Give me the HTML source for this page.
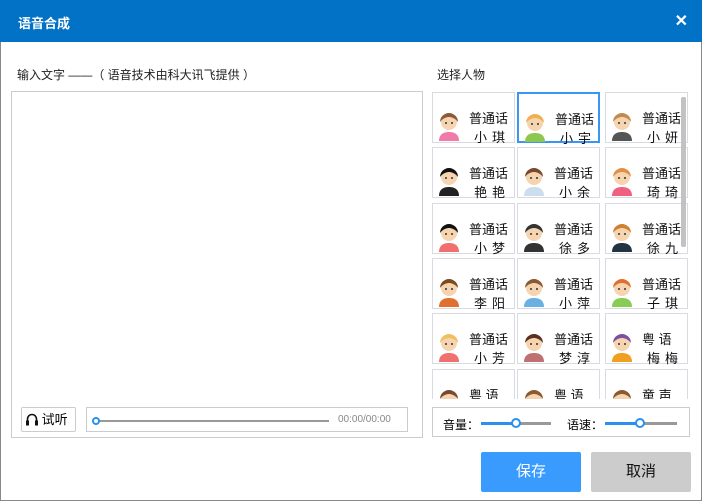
<!DOCTYPE html>
<html><head><meta charset="utf-8"><style>
*{margin:0;padding:0;box-sizing:border-box}
body{width:702px;height:501px;background:#fff;font-family:"Liberation Sans","Noto Sans CJK SC",sans-serif;position:relative;overflow:hidden}
.bl{position:absolute;background:#888}
.hd{position:absolute;left:0;top:0;width:702px;height:42px;background:#0272c6;color:#fff;font-weight:bold;font-size:13px}
.hd .t{position:absolute;left:18px;top:13px}
.hd .x{position:absolute;right:14px;top:11px;font-size:16px}
.lbl{position:absolute;font-size:12px;color:#222}
.ta{position:absolute;left:11px;top:91px;width:412px;height:347px;border:1px solid #ccc}
.btn{position:absolute;left:21px;top:407px;width:55px;height:25px;border:1px solid #ccc;border-radius:2px;font-size:13px;line-height:23px;padding-left:4px}
.prog{position:absolute;left:86px;top:407px;width:322px;height:25px;border:1px solid #ccc}
.grid{position:absolute;left:432px;top:92px;width:258px;height:307px;overflow:hidden}
.cell{position:absolute;width:83px;height:51px;border:1px solid #d8dce2;font-size:13px;color:#111}
.cell.sel{border:2px solid #3a96f5}
.cell .n1{position:absolute;left:36px;top:15px}
.cell .n2{position:absolute;left:41px;top:34px;letter-spacing:5px}
.av{position:absolute;left:4px;top:14px;width:24px;height:34px}
.sb{position:absolute;left:681px;top:97px;width:5px;height:150px;background:#c2c2c2;border-radius:2px}
.sl{position:absolute;left:432px;top:407px;width:258px;height:30px;border:1px solid #ccc;font-size:12px}
.b{position:absolute;top:452px;width:100px;height:40px;border-radius:2px;font-size:15px;text-align:center;line-height:40px}
</style></head><body>
<div class="bl" style="left:0;top:0;width:1px;height:501px"></div>
<div class="bl" style="right:0;top:0;width:1px;height:501px"></div>
<div class="bl" style="left:0;bottom:0;width:702px;height:1px"></div>
<div class="hd"><span class="t">语音合成</span><span class="x">✕</span></div>
<div class="lbl" style="left:17px;top:66px">输入文字 ——（ 语音技术由科大讯飞提供 ）</div>
<div class="lbl" style="left:437px;top:66px">选择人物</div>
<div class="ta"></div>
<div class="btn"><svg width="12" height="14" viewBox="0 0 12 14" style="vertical-align:-2px"><path d="M1.5 13V7a4.5 4.5 0 0 1 9 0v6" fill="none" stroke="#111" stroke-width="1.6"/><rect x="0" y="8.5" width="3" height="5" fill="#111"/><rect x="9" y="8.5" width="3" height="5" fill="#111"/></svg> 试听</div>
<div class="prog">
<div style="position:absolute;left:10px;top:12px;width:232px;height:2px;background:#999"></div>
<div style="position:absolute;left:5px;top:9px;width:8px;height:8px;border:2px solid #2a90f0;border-radius:50%;background:#fff"></div>
<div style="position:absolute;left:251px;top:6px;font-size:10px;color:#888">00:00/00:00</div>
</div>
<div class="grid" id="g"></div>
<div class="sb"></div>
<div class="sl">
<span style="position:absolute;left:10px;top:8px">音量：</span>
<div style="position:absolute;left:48px;top:14px;width:36px;height:3px;background:#2a90f0"></div>
<div style="position:absolute;left:84px;top:14px;width:34px;height:3px;background:#999"></div>
<div style="position:absolute;left:78px;top:10px;width:10px;height:10px;border:2px solid #2a90f0;border-radius:50%;background:#fff"></div>
<span style="position:absolute;left:134px;top:8px">语速：</span>
<div style="position:absolute;left:172px;top:14px;width:36px;height:3px;background:#2a90f0"></div>
<div style="position:absolute;left:208px;top:14px;width:36px;height:3px;background:#999"></div>
<div style="position:absolute;left:202px;top:10px;width:10px;height:10px;border:2px solid #2a90f0;border-radius:50%;background:#fff"></div>
</div>
<div class="b" style="left:481px;background:#3a9bff;color:#fff">保存</div>
<div class="b" style="left:591px;background:#ccc;color:#111">取消</div>
<script>
var d=[["普通话","小琪","#8a5a3a","#f07aa8"],["普通话","小宇","#f0b050","#8cc850"],["普通话","小妍","#c08a50","#555"],
["普通话","艳艳","#111","#222"],["普通话","小余","#7a4a30","#cde"],["普通话","琦琦","#e0904a","#f06080"],
["普通话","小梦","#111","#f07070"],["普通话","徐多","#333","#333"],["普通话","徐九","#d08030","#234"],
["普通话","李阳","#7a4a20","#e07030"],["普通话","小萍","#8a5a30","#6ab0e0"],["普通话","子琪","#e07030","#8c5"],
["普通话","小芳","#f0c060","#f07070"],["普通话","梦淳","#5a3020","#c07070"],["粤 语","梅梅","#8050a0","#f0a020"],
["粤 语","","#7a4a30","#fff"],["粤 语","","#8a5a30","#fff"],["童 声","","#8a5a30","#fff"]];
var xs=[0,85,173],h='';
d.forEach(function(c,i){var r=Math.floor(i/3),k=i%3;
h+='<div class="cell'+(i==1?' sel':'')+'" style="left:'+xs[k]+'px;top:'+(r*55.3)+'px">'+
'<svg class="av" viewBox="0 0 24 34"><path d="M2 34c0-7 5-9 10-9s10 2 10 9z" fill="'+c[3]+'"/><circle cx="12" cy="15" r="8" fill="#f7d4b0"/><path d="M3 15a9 9 0 0 1 18 0c-3-4-7-5-9-5s-6 1-9 5z" fill="'+c[2]+'"/><circle cx="9" cy="16" r="1" fill="#333"/><circle cx="15" cy="16" r="1" fill="#333"/></svg>'+
'<span class="n1">'+c[0]+'</span><span class="n2">'+c[1]+'</span></div>';});
document.getElementById('g').innerHTML=h;
</script>
</body></html>
